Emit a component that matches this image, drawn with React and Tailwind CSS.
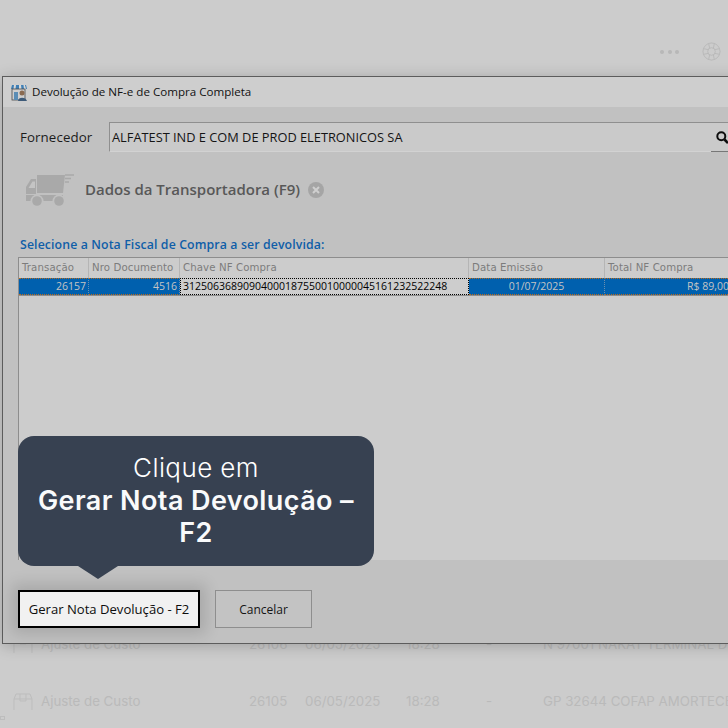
const ui = { fontFamily: '"Open Sans", "Noto Sans", sans-serif' };
const tbl = { fontFamily: '"DejaVu Sans", sans-serif' };

function Truck() {
  return (
    <svg width="52" height="36" viewBox="0 0 52 36" fill="none">
      <path d="M13 3 H41 L39 21 H13 Z" fill="#a9a9a9" />
      <path d="M2 22 V15 L7 7 H12 V22 Z" fill="#a9a9a9" />
      <path d="M4.500 16 L8.500 9.500 H11 V16 Z" fill="#c4c4c4" />
      <path d="M2 23 H39 V29 H2 Z" fill="#a9a9a9" />
      <circle cx="13" cy="29" r="6.500" fill="#c1c1c1" />
      <circle cx="13" cy="29" r="4.800" fill="#a9a9a9" />
      <circle cx="35" cy="29" r="6.500" fill="#c1c1c1" />
      <circle cx="35" cy="29" r="4.800" fill="#a9a9a9" />
      <path d="M41 3 H50 M41 6.500 H47 M41 10 H45" stroke="#a9a9a9" strokeWidth="1.400" />
    </svg>
  );
}

function Shop({ color = "#bdbdbd" }) {
  return (
    <svg width="20" height="18" viewBox="0 0 20 18" fill="none" stroke={color} strokeWidth="1">
      <path d="M1 6 L3 1 H17 L19 6 V17 M1 6 V17" />
      <path d="M1 6 H19 M7 1 V8 H13 V1" />
    </svg>
  );
}

function StoreIcon() {
  return (
    <svg width="17" height="17" viewBox="0 0 17 17">
      <path d="M1 1 H15 L16 5 H0 Z" fill="#3f7fb5" />
      <path d="M3 1 H5 L4.500 5 H2.500 Z M8 1 H10 L10.500 5 H8 Z M12.500 1 H14 L15 5 H13 Z" fill="#d8d8d8" />
      <rect x="1" y="5" width="13" height="11" fill="#cfcfcf" stroke="#4a4a4a" strokeWidth="0.800" />
      <rect x="3" y="8" width="4" height="8" fill="#5b8db5" />
      <circle cx="11" cy="9" r="2.500" fill="#8a6a50" />
      <path d="M7 17 C7 12.500 15 12.500 16 17 Z" fill="#3d5a78" />
    </svg>
  );
}

function HeadCell({ w, children }) {
  return (
    <div
      className="h-full shrink-0 flex items-center px-[3px] text-[10.2px] whitespace-nowrap overflow-hidden border-r border-[#b5b5b5] text-[#7c7c7c] tracking-[0.1px]"
      style={{ ...tbl, width: w }}
    >
      {children}
    </div>
  );
}

function BlueCell({ w, center, children }) {
  return (
    <div
      className={`h-full shrink-0 flex items-center px-[2px] text-[10.5px] whitespace-nowrap bg-[#0060ae] text-[#c4c4c4] border-y border-dotted border-y-[#b96a1c] border-r border-r-[#6d8fae] ${center ? "justify-center" : "justify-end"}`}
      style={{ width: w }}
    >
      {children}
    </div>
  );
}

const cols = [70, 91, 289, 136, 127];

function BgRow({ transaction, date, item }) {
  return (
    <div className="flex items-center h-[20px] text-[13.3px] text-[#bababa]">
      <div className="w-[41px] pl-[13px] shrink-0"><Shop /></div>
      <div className="w-[208px] shrink-0">Ajuste de Custo</div>
      <div className="w-[56px] shrink-0">{transaction}</div>
      <div className="w-[101px] shrink-0 whitespace-nowrap">{date}</div>
      <div className="w-[80px] shrink-0">18:28</div>
      <div className="w-[57px] shrink-0">-</div>
      <div className="whitespace-nowrap">{item}</div>
    </div>
  );
}

export default function App() {
  return (
    <div className="relative w-[728px] h-[728px] overflow-hidden bg-[#cccccc]" style={{ fontFamily: "Inter, sans-serif" }}>
      {/* background page */}
      <div className="flex justify-end items-center gap-[23px] pt-[42px] pr-[7px]">
        <div className="flex gap-[3.500px]">
          <span className="w-[4px] h-[4px] rounded-full bg-[#b8b8b8]" />
          <span className="w-[4px] h-[4px] rounded-full bg-[#b8b8b8]" />
          <span className="w-[4px] h-[4px] rounded-full bg-[#b8b8b8]" />
        </div>
        <svg width="19" height="19" viewBox="0 0 20 20" fill="none" stroke="#b8b8b8" strokeWidth="1">
          <circle cx="10" cy="10" r="9" />
          <circle cx="10" cy="10" r="4" />
          <path d="M7 1.500 L8 6.500 M13 1.500 L12 6.500 M7 18.500 L8 13.500 M13 18.500 L12 13.500 M1.500 7 L6.500 8 M1.500 13 L6.500 12 M18.500 7 L13.500 8 M18.500 13 L13.500 12" />
        </svg>
      </div>
      <div className="absolute left-0 top-[635px] w-[800px] flex flex-col gap-[37px]">
        <BgRow transaction="26106" date="06/05/2025" item="N 97001 NAKAT TERMINAL DIR" />
        <BgRow transaction="26105" date="06/05/2025" item="GP 32644 COFAP AMORTECEDOR" />
      </div>
      <div className="absolute left-0 top-[716px] w-[5px] h-[4px] border border-[#bdbdbd]" />

      {/* dialog window */}
      <div
        className="absolute left-[2px] top-[76px] w-[760px] h-[568px] flex flex-col border border-[#5c5c5c] bg-[#c1c1c1] shadow-[0_2px_14px_rgba(0,0,0,0.22)]"
        style={ui}
      >
        <div className="h-[30px] shrink-0 flex items-center gap-[4px] pl-[8px] bg-[#cecece] text-[11.6px] text-[#111]">
          <StoreIcon />
          <span>Devolução de NF-e de Compra Completa</span>
        </div>

        <div className="flex-1 flex flex-col pl-[15px]">
          <div className="flex items-center mt-[15px] h-[30px] shrink-0">
            <div className="w-[91px] pl-[2px] pt-[2px] text-[13.3px] text-[#1c1c1c] tracking-[0.1px]">Fornecedor</div>
            <div className="w-[602px] h-full flex items-center pl-[2px] pt-[2px] bg-[#cacaca] border-t border-l border-[#8f8f8f] border-b-[#d2d2d2] border-b text-[12.8px] text-[#141414]">
              ALFATEST IND E COM DE PROD ELETRONICOS SA
            </div>
            <div className="w-[40px] h-full flex items-center pl-[5px] bg-[#cacaca] border-t border-[#8f8f8f] border-b-[#777] border-b">
              <svg width="13" height="13" viewBox="0 0 13 13" fill="none" stroke="#0d0d0d">
                <circle cx="5.300" cy="5.300" r="4" strokeWidth="2" />
                <path d="M8.500 8.500 L12 12" strokeWidth="2.600" />
              </svg>
            </div>
          </div>

          <div className="flex items-center mt-[18px] h-[40px] shrink-0 pl-[6px]">
            <Truck />
            <span className="ml-[9px] mb-[2px] text-[15px] font-semibold text-[#585858]">Dados da Transportadora (F9)</span>
            <span className="ml-[8px] w-[16px] h-[16px] rounded-full bg-[#a5a5a5] flex items-center justify-center">
              <svg width="8" height="8" viewBox="0 0 8 8" stroke="#cfcfcf" strokeWidth="2"><path d="M1 1 L7 7 M7 1 L1 7" /></svg>
            </span>
          </div>

          <div className="mt-[26px] ml-[2px] text-[12.3px] leading-[17px] font-semibold text-[#0f5ea8] tracking-[0.12px]">
            Selecione a Nota Fiscal de Compra a ser devolvida:
          </div>

          <div className="mt-[4px] h-[303px] shrink-0 border-t border-l border-[#8d8d8d] bg-[#cccccc] overflow-hidden">
            <div className="flex h-[20px]">
              <HeadCell w={cols[0]}>Transação</HeadCell>
              <HeadCell w={cols[1]}>Nro Documento</HeadCell>
              <HeadCell w={cols[2]}>Chave NF Compra</HeadCell>
              <HeadCell w={cols[3]}>Data Emissão</HeadCell>
              <HeadCell w={cols[4]}>Total NF Compra</HeadCell>
            </div>
            <div className="flex h-[17px] border-b border-[#8d8d8d] box-content">
              <BlueCell w={cols[0]}>26157</BlueCell>
              <BlueCell w={cols[1]}>4516</BlueCell>
              <div
                className="h-full shrink-0 flex items-center px-[2px] text-[10.5px] whitespace-nowrap bg-[#cdcdcd] text-black border border-dotted border-black"
                style={{ width: cols[2] }}
              >
                31250636890904000187550010000045161232522248
              </div>
              <BlueCell center w={cols[3]}>01/07/2025</BlueCell>
              <BlueCell w={cols[4]}>R$ 89,00</BlueCell>
            </div>
          </div>

          <div className="flex gap-[15px] mt-[30px] text-[12px]">
            <button className="w-[182px] h-[38px] pt-[2px] bg-[#f1f1f1] border-2 border-black text-[13.1px] text-[#0d0d0d] shadow-[0_0_14px_6px_rgba(0,0,0,0.13)]">
              Gerar Nota Devolução - F2
            </button>
            <button className="w-[97px] h-[38px] pt-[2px] bg-[#c3c3c3] border border-[#8e8e8e] text-[#141414]">
              Cancelar
            </button>
          </div>
        </div>
      </div>

      {/* tooltip */}
      <div className="absolute left-[18px] top-[436px] w-[356px] h-[130px] rounded-[16px] bg-[#374151] flex flex-col items-center justify-center text-center text-white leading-[32.500px] px-[18px]">
        <div className="font-light text-[26px] tracking-[0.4px]">Clique em</div>
        <div className="font-semibold text-[27px] tracking-[0.4px] text-[#f9fafb]">Gerar Nota Devolução – F2</div>
        <div className="absolute left-[60px] -bottom-[13px] w-0 h-0 border-l-[20px] border-r-[20px] border-t-[13px] border-l-transparent border-r-transparent border-t-[#374151]" />
      </div>
    </div>
  );
}
